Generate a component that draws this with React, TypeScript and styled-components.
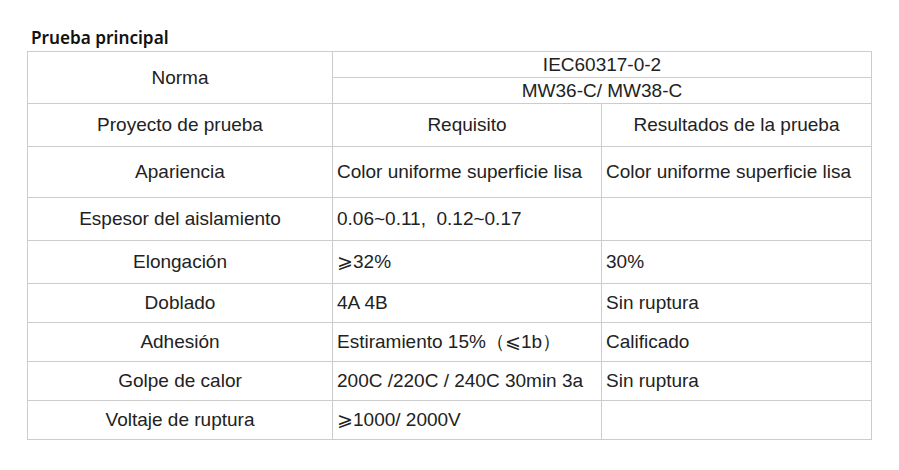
import React from "react";
import styled, { createGlobalStyle } from "styled-components";

const Global = createGlobalStyle`
  html, body { margin: 0; padding: 0; background: #ffffff; }
  body { font-family: "Liberation Sans", Arial, sans-serif; }
`;

const Page = styled.div`
  padding: 27px 0 0 27px;
  width: 899px;
  box-sizing: border-box;
`;

const Title = styled.h3`
  margin: 0 0 2px 4px;
  font-family: "Noto Sans", "Open Sans", sans-serif;
  font-weight: 600;
  font-size: 17.2px;
  line-height: 22px;
  color: #111;
`;

const Table = styled.table`
  border-collapse: collapse;
  table-layout: fixed;
  width: 844px;
  color: #222;
  font-family: "Liberation Sans", Arial, sans-serif;
  font-size: 19px;
`;

const Row = styled.tr<{ $h: number }>`
  height: ${(p) => p.$h}px;
`;

const Cell = styled.td<{ $align?: "left" | "center" }>`
  border: 1px solid #cccccc;
  padding: ${(p) => (p.$align === "center" ? "0" : "0 0 0 4px")};
  text-align: ${(p) => p.$align ?? "left"};
  vertical-align: middle;
  white-space: pre;
  line-height: 20px;
`;

const rows: [string, string, string, number][] = [
  ["Apariencia", "Color uniforme superficie lisa", "Color uniforme superficie lisa", 51],
  ["Espesor del aislamiento", "0.06~0.11,  0.12~0.17", "", 43],
  ["Elongación", "⩾32%", "30%", 43],
  ["Doblado", "4A 4B", "Sin ruptura", 39],
  ["Adhesión", "Estiramiento 15%（⩽1b）", "Calificado", 39],
  ["Golpe de calor", "200C /220C / 240C 30min 3a", "Sin ruptura", 39],
  ["Voltaje de ruptura", "⩾1000/ 2000V", "", 39],
];

export default function App() {
  return (
    <Page>
      <Global />
      <Title>Prueba principal</Title>
      <Table>
        <colgroup>
          <col style={{ width: 305 }} />
          <col style={{ width: 269 }} />
          <col style={{ width: 270 }} />
        </colgroup>
        <tbody>
          <Row $h={26}>
            <Cell $align="center" rowSpan={2}>Norma</Cell>
            <Cell $align="center" colSpan={2}>IEC60317-0-2</Cell>
          </Row>
          <Row $h={26}>
            <Cell $align="center" colSpan={2}>MW36-C/ MW38-C</Cell>
          </Row>
          <Row $h={43}>
            <Cell $align="center">Proyecto de prueba</Cell>
            <Cell $align="center">Requisito</Cell>
            <Cell $align="center">Resultados de la prueba</Cell>
          </Row>
          {rows.map(([a, b, c, h]) => (
            <Row $h={h} key={a}>
              <Cell $align="center">{a}</Cell>
              <Cell>{b}</Cell>
              <Cell>{c}</Cell>
            </Row>
          ))}
        </tbody>
      </Table>
    </Page>
  );
}
